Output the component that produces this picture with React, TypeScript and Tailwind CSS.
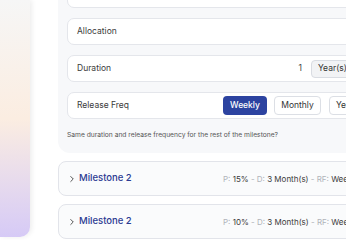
import { ChevronRight } from 'lucide-react';

const Row = ({ label, children, pr = 'pr-[9px]' }: { label?: string; children?: React.ReactNode; pr?: string }) => (
  <div className={`h-[27px] w-[310px] shrink-0 rounded-[7px] border border-[#e4e6eb] bg-white flex items-center pl-[9px] ${pr} text-[8.5px] text-[#3b3b3b]`}>
    {label && <span>{label}</span>}
    <div className="ml-auto flex items-center">{children}</div>
  </div>
);

const Milestone = ({ p }: { p: string }) => (
  <div className="h-[35px] w-[320px] shrink-0 rounded-[8px] border border-[#e2e4ea] bg-[#fafbfc] flex items-center pl-[8px]">
    <div className="w-[156px] flex items-center gap-[2px]">
      <ChevronRight size={10} strokeWidth={2} className="text-[#333]" />
      <span className="text-[9.5px] font-medium text-[#2b3a92]">Milestone 2</span>
    </div>
    <span className="text-[8px] whitespace-nowrap text-[#b0b3ba]">
      P: <span className="text-[#3a3a3a]">{p}</span> - D: <span className="text-[#3a3a3a]">3 Month(s)</span> - RF: <span className="text-[#3a3a3a]">Weekly</span>
    </span>
  </div>
);

export default function App() {
  return (
    <div className="w-[346px] h-[240px] overflow-hidden flex bg-white font-['Inter',sans-serif]">
      <div className="w-[30px] h-[237px] shrink-0 rounded-br-[10px] bg-linear-to-b from-[#f6f6f6] via-[#fbede1] to-[#d6caf6] shadow-[2px_0_5px_rgba(0,0,0,0.07)]" />
      <div className="ml-[28px] flex flex-col">
        <div className="mt-[-19px] w-[330px] bg-[#f7f8fa] rounded-bl-[12px] pl-[9px] pb-[13px] flex flex-col">
          <div className="flex flex-col gap-[10px]">
            <Row />
            <Row label="Allocation" />
            <Row label="Duration" pr="pr-[9px]">
              <span className="text-[8.5px] text-[#444] mr-[9px]">1</span>
              <div className="h-[18px] w-[56px] rounded-[4px] border border-[#d9dce2] bg-[#f2f3f5] flex items-center pl-[6px] text-[8.5px] text-[#333]">
                Year(s)
              </div>
            </Row>
            <Row label="Release Freq" pr="pr-[3px]">
              <div className="flex items-center gap-[7px]">
                <div className="h-[19px] w-[44px] rounded-[4px] bg-[#2c43a0] text-white text-[8.5px] font-medium flex items-center justify-center">Weekly</div>
                <div className="h-[19px] w-[47px] rounded-[4px] border border-[#dcdfe5] bg-white text-[8.5px] text-[#333] flex items-center justify-center">Monthly</div>
                <div className="h-[19px] w-[44px] rounded-[4px] border border-[#dcdfe5] bg-white text-[8.5px] text-[#333] flex items-center pl-[6px] ml-[1px]">Yearly</div>
              </div>
            </Row>
          </div>
          <p className="mt-[12px] text-[6.7px] leading-[9px] text-[#555]">
            Same duration and release frequency for the rest of the milestone?
          </p>
        </div>
        <div className="mt-[8px] flex flex-col gap-[8px]">
          <Milestone p="15%" />
          <Milestone p="10%" />
        </div>
      </div>
    </div>
  );
}
